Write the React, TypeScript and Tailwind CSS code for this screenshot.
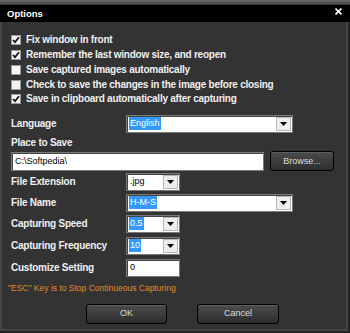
import { ReactNode } from "react";

const font = { fontFamily: "'Liberation Sans', Arial, sans-serif" };

const Check = ({ checked, label }: { checked: boolean; label: string }) => (
  <div className="flex items-center h-[14.75px] gap-[5px]">
    <div className="w-[10px] h-[10px] bg-[#f4f4f4] border border-[#9a9a9a] flex items-center justify-center">
      {checked && (
        <svg width="8" height="8" viewBox="0 0 8 8">
          <path d="M1 4 L3 6.2 L7 1.2" stroke="#111" strokeWidth="1.8" fill="none" />
        </svg>
      )}
    </div>
    <span className="text-[10px] font-bold tracking-[-0.25px] text-[#f0f0f0] leading-none">{label}</span>
  </div>
);

const Arrow = () => (
  <div className="w-[15px] h-[14px] bg-[#eeeeee] border border-[#b8b8b8] flex items-center justify-center mr-[1px]">
    <svg width="7" height="4" viewBox="0 0 7 4">
      <path d="M0 0 H7 L3.5 4 Z" fill="#000" />
    </svg>
  </div>
);

const Select = ({ value, wide, selected }: { value: string; wide?: boolean; selected?: boolean }) => (
  <div
    className={`${wide ? "w-[167px]" : "w-[54px]"} h-[18px] bg-white border border-[#7a7a7a] shadow-[inset_1px_1px_0_#444] flex items-center justify-between pl-[2px]`}
  >
    <span
      className={`text-[9px] leading-[13px] px-[1px] ${selected ? "bg-[#3399ff] text-white" : "text-black"}`}
    >
      {value}
    </span>
    <Arrow />
  </div>
);

const Row = ({ label, children, top }: { label: string; children: ReactNode; top: string }) => (
  <div className={`flex items-center h-[18px] ${top}`}>
    <span className="w-[115px] text-[10px] font-bold tracking-[-0.25px] text-[#f0f0f0] leading-none">
      {label}
    </span>
    {children}
  </div>
);

const Btn = ({ label, w }: { label: string; w: string }) => (
  <div
    className={`${w} h-[20px] rounded-[3px] border border-black bg-gradient-to-b from-[#4c4c4c] to-[#2e2e2e] shadow-[inset_0_1px_0_#5e5e5e] flex items-center justify-center text-[9px] text-[#dcdcdc]`}
  >
    {label}
  </div>
);

export default function App() {
  return (
    <div className="w-[350px] h-[333px] bg-[#232323] overflow-hidden" style={font}>
      <div className="h-[5px] bg-gradient-to-b from-[#6a6a6a] to-[#4a4a4a] border-b border-[#3a3a3a]" />
      <div className="h-[17px] bg-black flex items-center justify-between pl-[7px] pr-[8px]">
        <span className="text-[9.5px] font-bold text-white leading-none mt-[1px]">Options</span>
        <svg width="7" height="7" viewBox="0 0 7 7" className="-mt-[5px]">
          <path d="M0.5 0.5 L6.5 6.5 M6.5 0.5 L0.5 6.5" stroke="#fff" strokeWidth="1.6" />
        </svg>
      </div>
      <div className="w-[348px] h-[309px] bg-[#333333] border-l-2 border-r-2 border-b-2 border-[#454545] pl-[9px] pt-[11px] flex flex-col">
        <div className="flex flex-col">
          <Check checked label="Fix window in front" />
          <Check checked label="Remember the last window size, and reopen" />
          <Check checked={false} label="Save captured images automatically" />
          <Check checked={false} label="Check to save the changes in the image before closing" />
          <Check checked label="Save in clipboard automatically after capturing" />
        </div>
        <Row label="Language" top="mt-[8px]">
          <Select value="English" wide selected />
        </Row>
        <div className="h-[14px] mt-[3px] flex items-center text-[10px] font-bold tracking-[-0.25px] text-[#f0f0f0] leading-none">
          Place to Save
        </div>
        <div className="flex items-center mt-[2px] h-[19px]">
          <div className="w-[253px] h-[19px] bg-white border border-[#7a7a7a] shadow-[inset_1px_1px_0_#444] flex items-center pl-[3px] text-[9px] text-black">
            C:\Softpedia\
          </div>
          <div className="ml-[6px]">
            <Btn label="Browse..." w="w-[64px]" />
          </div>
        </div>
        <Row label="File Extension" top="mt-[2px]">
          <Select value=".jpg" />
        </Row>
        <Row label="File Name" top="mt-[3px]">
          <Select value="H-M-S" wide selected />
        </Row>
        <Row label="Capturing Speed" top="mt-[3px]">
          <Select value="0.5" selected />
        </Row>
        <Row label="Capturing Frequency" top="mt-[4px]">
          <Select value="10" selected />
        </Row>
        <Row label="Customize Setting" top="mt-[4px]">
          <div className="w-[54px] h-[18px] bg-white border border-[#7a7a7a] shadow-[inset_1px_1px_0_#444] flex items-center pl-[3px] text-[9px] text-black">
            0
          </div>
        </Row>
        <div className="mt-[4px] -ml-[3px] h-[14px] flex items-center text-[8.5px] text-[#e08a2a] leading-none">
          "ESC" Key is to Stop Continueous Capturing
        </div>
        <div className="flex mt-[9px] ml-[75px] gap-[30px]">
          <Btn label="OK" w="w-[81px]" />
          <Btn label="Cancel" w="w-[82px]" />
        </div>
      </div>
    </div>
  );
}
